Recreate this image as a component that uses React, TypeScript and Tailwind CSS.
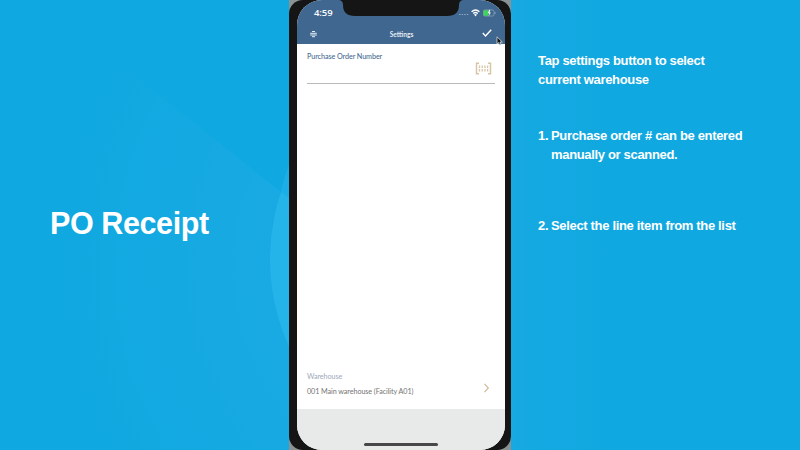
import React from "react";

const helv = "font-['Liberation_Sans',Arial,sans-serif]";

/* Faint concentric light shapes behind the title */
function Backdrop() {
  return (
    <svg className="absolute inset-0" width="289" height="450" viewBox="0 0 289 450" aria-hidden="true">
      <defs>
        <radialGradient id="glow" gradientUnits="userSpaceOnUse" cx="470" cy="265" r="410">
          <stop offset="0.42" stopColor="#1aaae3" />
          <stop offset="1" stopColor="#1aaae3" stopOpacity="0" />
        </radialGradient>
      </defs>
      <path d="M0 0 L85 37 L281 192 L289 198 V450 H0Z" fill="url(#glow)" />
      <circle cx="480" cy="259" r="210" fill="#25b4ea" />
      <path d="M289 165 V198 L281 192 Q283 180 289 165Z" fill="#1caee6" />
    </svg>
  );
}

function StatusBar() {
  return (
    <div className="flex h-[25px] items-center justify-between pr-[9px] pl-[17px] text-white">
      <span className="font-['Open_Sans',sans-serif] text-[9.5px] leading-none font-semibold tracking-[-0.1px]">4:59</span>
      <div className="flex items-center gap-[2px]">
        <svg width="11" height="8" viewBox="0 0 11 8" fill="#8fa9c4">
          <path d="M1 5h1.5v1H1zM3.6 5h1.5v1H3.6zM6.2 5h1.5v1H6.2zM8.8 5h1.5v1H8.8z" />
        </svg>
        <svg width="9" height="8" viewBox="0 0 9 8" fill="none" stroke="#fff" strokeWidth="1.4">
          <path d="M.6 2.7Q4.5-.7 8.4 2.7M2.2 4.5Q4.5 2.5 6.8 4.5" />
          <path d="M3 5.6Q4.5 4.6 6 5.6L4.5 7.4Z" fill="#fff" stroke="none" />
        </svg>
        <svg width="14" height="8" viewBox="0 0 14 8">
          <rect x="1.5" y="1" width="10.5" height="6" rx="1.5" fill="none" stroke="#8aa2ba" strokeWidth=".8" />
          <path d="M1.5 1.2h5v5.6h-5z" fill="#40d45e" />
          <path d="M7.2.8 5.7 4.2h1.5L6.5 7.2 9 3.4H7.7L8.2.8z" fill="#e7fbef" />
          <path d="M13 3v2" stroke="#8aa2ba" />
        </svg>
      </div>
    </div>
  );
}

function NavBar() {
  return (
    <div className="grid h-[19px] grid-cols-[1fr_auto_1fr] items-center pr-[12px] pl-[13px] text-white">
      <svg className="-mt-[2px]" width="7" height="8" viewBox="0 0 7 8" fill="none" stroke="#e4edf5" strokeWidth="1">
        <path d="M2 1.5h3M.2 3.3h6.6M.2 5h6.6M2 6.7h3" />
      </svg>
      <span className="-mt-[1px] font-[Lato,sans-serif] text-[6.6px] leading-none font-bold text-[#e4ebf2]">Settings</span>
      <svg className="-mt-[3px] justify-self-end" width="12" height="10" viewBox="0 0 12 10" fill="none" stroke="#fff" strokeWidth="1.4">
        <path d="M1.8 5.1 4.5 7.9 10.2 1.7" />
      </svg>
    </div>
  );
}

function ScanIcon() {
  return (
    <svg width="17" height="13" viewBox="0 0 17 13" fill="none" stroke="#d9c5a5">
      <path d="M4 1.3H1.5v10.4H4M13 1.3h2.5v10.4H13" strokeWidth="1.5" />
      <path d="M4.5 3.5v2.6M7.2 3.5v2.6M9.9 3.5v2.6M12.6 3.5v2.6M4.5 7v2.6M7.2 7v2.6M9.9 7v2.6M12.6 7v2.6" strokeWidth="1.3" />
    </svg>
  );
}

function Phone() {
  return (
    <div className="relative h-[450px] w-[222px] shrink-0 bg-[#8a9294]">
      <div className="h-full rounded-[14px] bg-[#151515] pr-[6px] pl-[8px]">
        <div className="flex h-full flex-col overflow-hidden rounded-[25px] bg-white font-[Lato,sans-serif]">
          <header className="h-[44px] shrink-0 bg-[#40678f]">
            <StatusBar />
            <NavBar />
          </header>
          <main className="flex flex-1 flex-col justify-between pl-[10px]">
            <section className="mr-[10px] flex h-[40px] justify-between border-b border-[#b9b9b9] pr-[3px]">
              <label className="pt-[8px] text-[7.2px] leading-[9px] font-medium tracking-[-0.08px] whitespace-nowrap text-[#476a91]">
                Purchase Order Number
              </label>
              <div className="pt-[18px]">
                <ScanIcon />
              </div>
            </section>
            <section className="flex h-[37px] items-start justify-between pr-[15px]">
              <div className="whitespace-nowrap">
                <p className="text-[7.2px] leading-[9px] tracking-[-0.07px] text-[#9da9bb]">Warehouse</p>
                <p className="mt-[6px] text-[7.2px] leading-[9px] tracking-[-0.07px] text-[#747474]">001 Main warehouse (Facility A01)</p>
              </div>
              <svg className="mt-[11px]" width="7" height="10" viewBox="0 0 7 10" fill="none" stroke="#d0bb98" strokeWidth="1.2">
                <path d="M1.5 .8 5.3 5 1.5 9.2" />
              </svg>
            </section>
          </main>
          <footer className="flex h-[41px] shrink-0 items-end justify-center bg-[#e8e9e9] pb-[4px]">
            <div className="h-[3px] w-[74px] rounded-full bg-[#484648]" />
          </footer>
        </div>
      </div>
      <svg className="absolute top-0 left-[50px]" width="124" height="17" viewBox="0 0 124 17" aria-hidden="true">
        <path d="M0 0H124Q120 .5 120 5Q120 16 108 16H16Q4 16 4 5Q4 .5 0 0Z" fill="#151515" />
      </svg>
      <svg className="absolute top-[36px] left-[207px]" width="7" height="10" viewBox="0 0 7 10" aria-hidden="true">
        <path d="M1 .8V8L2.6 6.5 3.7 9 5 8.4 4 6H6.3Z" fill="#111" stroke="#d8dde2" strokeWidth=".8" />
      </svg>
    </div>
  );
}

export default function App() {
  return (
    <div className={`flex h-[450px] w-[800px] overflow-hidden bg-[#10a8e0] text-white ${helv}`}>
      <section className="relative w-[289px] shrink-0 overflow-hidden">
        <Backdrop />
        <h1 className="relative pt-[205px] pl-[50px] text-[30.5px] leading-[36px] font-bold tracking-[-0.4px] whitespace-nowrap">PO Receipt</h1>
      </section>
      <Phone />
      <section className="flex-1 bg-linear-to-r from-[#16a9e2] to-[#10a8e0] to-35% pt-[51px] pl-[27px] text-[13px] leading-[19px] font-bold tracking-[-0.33px] whitespace-nowrap">
        <p>Tap settings button to select<br />current warehouse</p>
        <ol className="mt-[37px]">
          <li className="flex">
            <span className="w-[13px] shrink-0">1.</span>
            <p>Purchase order # can be entered<br />manually or scanned.</p>
          </li>
          <li className="mt-[52px] flex">
            <span className="w-[13px] shrink-0">2.</span>
            <p>Select the line item from the list</p>
          </li>
        </ol>
      </section>
    </div>
  );
}
